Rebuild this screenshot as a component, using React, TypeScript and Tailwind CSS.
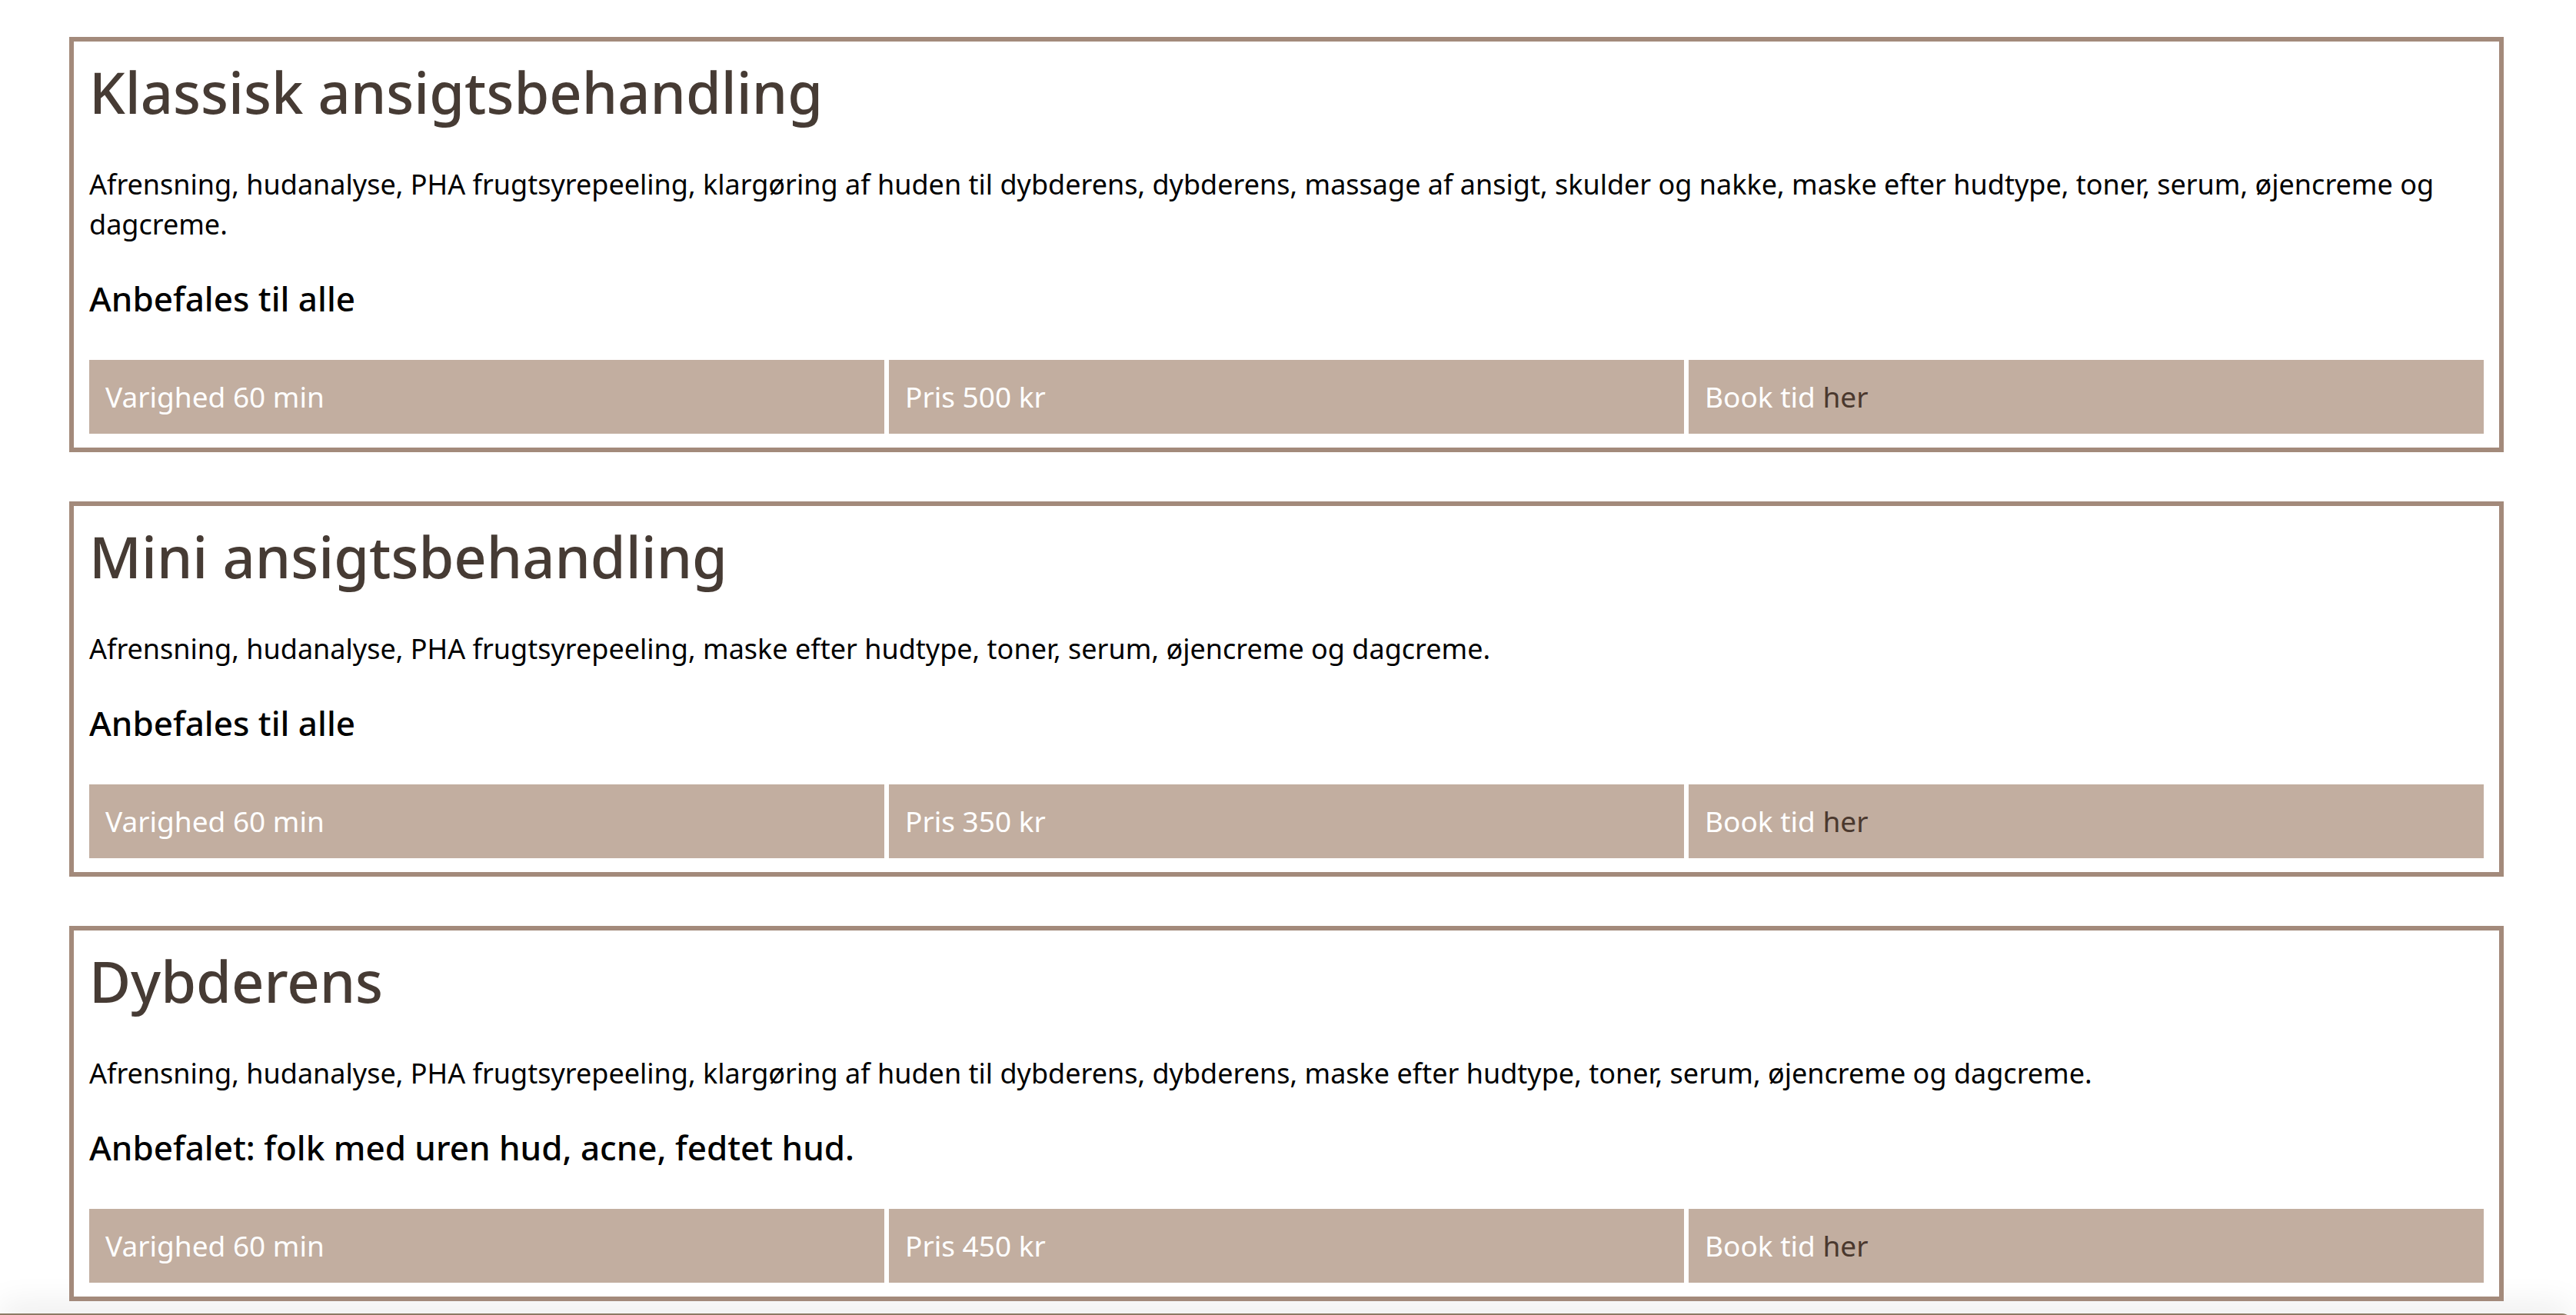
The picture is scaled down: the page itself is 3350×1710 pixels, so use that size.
import React from "react";

type Treatment = {
  title: string;
  desc: string;
  rec: string;
  price: string;
};

const treatments: Treatment[] = [
  {
    title: "Klassisk ansigtsbehandling",
    desc: "Afrensning, hudanalyse, PHA frugtsyrepeeling, klargøring af huden til dybderens, dybderens, massage af ansigt, skulder og nakke, maske efter hudtype, toner, serum, øjencreme og dagcreme.",
    rec: "Anbefales til alle",
    price: "Pris 500 kr",
  },
  {
    title: "Mini ansigtsbehandling",
    desc: "Afrensning, hudanalyse, PHA frugtsyrepeeling, maske efter hudtype, toner, serum, øjencreme og dagcreme.",
    rec: "Anbefales til alle",
    price: "Pris 350 kr",
  },
  {
    title: "Dybderens",
    desc: "Afrensning, hudanalyse, PHA frugtsyrepeeling, klargøring af huden til dybderens, dybderens, maske efter hudtype, toner, serum, øjencreme og dagcreme.",
    rec: "Anbefalet: folk med uren hud, acne, fedtet hud.",
    price: "Pris 450 kr",
  },
];

function Card({ t }: { t: Treatment }) {
  return (
    <section className="ml-[90px] w-[3166px] border-[6px] border-[#a38a7b] bg-white px-[20px] pt-[18px] pb-[18px]">
      <h2 className="text-[74px] leading-[96px] font-medium text-[#463b34]">{t.title}</h2>
      <p className="mt-[46px] text-[36px] leading-[52px] text-black">{t.desc}</p>
      <h3 className="mt-[42px] text-[44px] leading-[56px] font-medium text-black">{t.rec}</h3>
      <div className="mt-[52px] grid grid-cols-3 gap-[6px]">
        <div className="flex h-[96px] items-center bg-[#c2aea0] pl-[21px] text-[37px] text-white">Varighed 60 min</div>
        <div className="flex h-[96px] items-center bg-[#c2aea0] pl-[21px] text-[37px] text-white">{t.price}</div>
        <div className="flex h-[96px] items-center bg-[#c2aea0] pl-[21px] text-[37px] text-white">
          <span>
            Book tid <a className="text-[#4a382e]">her</a>
          </span>
        </div>
      </div>
    </section>
  );
}

export default function App() {
  return (
    <div className="min-h-[1710px] overflow-hidden bg-white font-['Noto_Sans',sans-serif]">
      <div className="flex flex-col gap-[64px] pt-[48px]">
        {treatments.map((t) => (
          <Card key={t.title} t={t} />
        ))}
      </div>
      <div className="mt-[16px] mr-[6px] h-[40px] rounded-tr-[12px] border-t-[2px] border-[#8c7b64] bg-white shadow-[0_-14px_40px_rgba(0,0,0,0.07)]" />
    </div>
  );
}
